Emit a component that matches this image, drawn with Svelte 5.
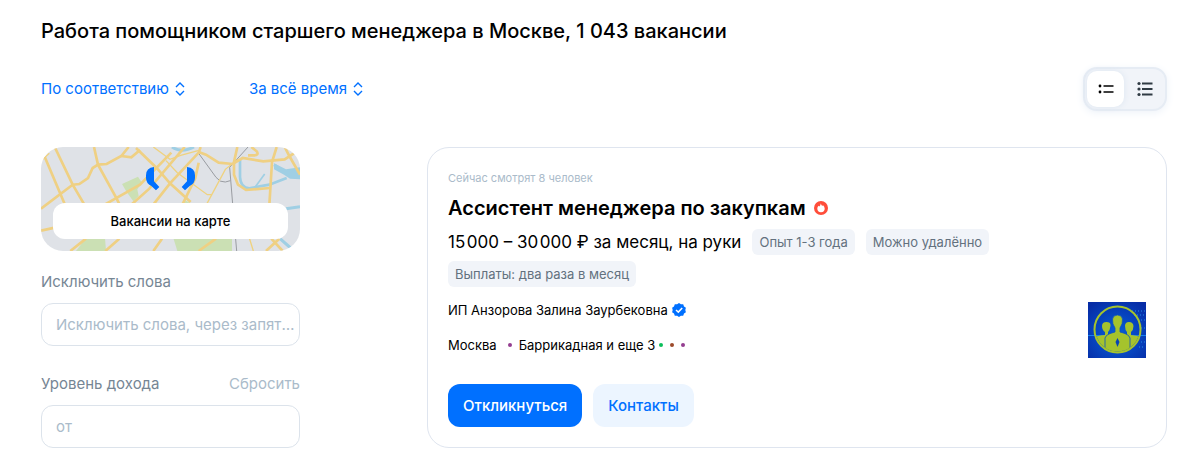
<script lang="ts">
  type View = "compact" | "full";

  let view = $state<View>("compact");
  let excluded = $state("");
  let salary = $state("");

  const sorts = ["По соответствию", "За всё время"];
  const tags = ["Опыт 1-3 года", "Можно удалённо", "Выплаты: два раза в месяц"];
  const metroLines = ["#0bbf5b", "#9c4a2b", "#943e90"];
</script>

<main class="page">
  <h1>Работа помощником старшего менеджера в Москве, 1 043 вакансии</h1>

  <div class="toolbar">
    <div class="sorts">
      {#each sorts as label (label)}
        <button class="sort" type="button">
          {label}
          <svg width="10" height="14" viewBox="0 0 10 14" aria-hidden="true">
            <path d="M1 5 L5 1 L9 5 M1 9 L5 13 L9 9" fill="none" stroke="currentColor" stroke-width="1.4" />
          </svg>
        </button>
      {/each}
    </div>
    <div class="switch" role="group" aria-label="Вид списка">
      <button
        type="button"
        class:active={view === "compact"}
        aria-label="Кратко"
        onclick={() => (view = "compact")}
      >
        <svg width="16" height="16" viewBox="0 0 16 16" aria-hidden="true">
          <path d="M5.5 5H15.5M5.5 11H15.5" stroke="#000" stroke-width="1.5" />
          <circle cx="2" cy="5" r="1.4" />
          <circle cx="2" cy="11" r="1.4" />
        </svg>
      </button>
      <button
        type="button"
        class:active={view === "full"}
        aria-label="Подробно"
        onclick={() => (view = "full")}
      >
        <svg width="16" height="16" viewBox="0 0 16 16" fill="#303b44" aria-hidden="true">
          <path d="M5 2.5H15.500M5 8H15.500M5 13.500H15.500" stroke="#303b44" stroke-width="2" />
          <circle cx="2" cy="2.500" r="1.6" />
          <circle cx="2" cy="8" r="1.6" />
          <circle cx="2" cy="13.500" r="1.6" />
        </svg>
      </button>
    </div>
  </div>

  <div class="columns">
    <aside>
      <div class="map">
        <svg viewBox="15 15 777 312" preserveAspectRatio="xMidYMid slice" aria-hidden="true">
          <rect x="15" y="15" width="777" height="312" fill="#dfe2e7" />
          <g fill="#cbe0b4">
            <path d="M258 126L306 104L318 122L304 142L308 162L292 178L272 150Z" />
            <path d="M120 327L150 288H207L210 327Z" />
            <path d="M412 288H588V327H424Z" />
            <path d="M436 186L450 176L468 186Z" />
          </g>
          <g fill="none" stroke="#9fcfe4">
            <path d="M408 15Q436 34 474 15" stroke-width="9" />
            <path d="M612 50V105Q614 138 640 139L700 128L752 108" stroke-width="8" />
            <path d="M656 137L686 96" stroke-width="5" />
            <path d="M714 68L752 92L792 88" stroke-width="9" />
            <path d="M750 200L792 194M732 290L764 318" stroke-width="9" />
          </g>
          <path d="M714 64L750 82L792 76V112L762 110L744 98L714 82Z" fill="#9fcfe4" />
          <g fill="none" stroke="#999ca1" stroke-width="3">
            <path d="M488 34L540 106Q552 122 568 120L583 116" />
            <path d="M636 15L581 76L590 186L602 327" />
          </g>
          <g fill="none" stroke="#efd27f" stroke-width="4">
            <path d="M352 15L402 52L434 40L486 26M390 56L424 92L514 158L528 158" />
            <path d="M606 52L568 82L510 190M640 288L652 327" />
            <path d="M20 52L40 34" />
          </g>
          <g fill="none" stroke="#efd083" stroke-width="8">
            <path d="M26 44L86 186M56 15L110 128L150 196" />
            <path d="M15 200L110 128L130 126L156 108L170 78L186 68L212 66L256 42L278 15" />
            <path d="M174 15L186 68L242 170L252 190" />
            <path d="M256 42L286 46L312 24" />
            <path d="M300 18L362 78L402 124L464 180" />
            <path d="M446 15L340 140L284 190M406 32L312 128L206 188" />
            <path d="M494 15L488 32L402 124L350 190M488 62L478 108L438 190" />
            <path d="M488 30L510 38L548 62L590 66L620 48L682 58L746 52L792 22" />
            <path d="M604 15L594 60V98L606 128L630 144L702 138" />
            <path d="M636 40H654Q670 40 662 28L646 15" />
            <path d="M722 15L708 60L700 190M746 15L760 42L792 98" />
            <path d="M15 266L60 256M103 327L150 290M208 327L250 290M352 327L378 290M488 327L540 290M690 327L730 290M706 290L740 327" />
          </g>
          <path d="M354 75Q330 77 330 100V108Q330 124 346 132L360 145L370 135L354 118Z" fill="#0070ff" />
          <path d="M453 75Q477 77 477 100V108Q477 124 461 132L447 145L437 135L453 118Z" fill="#0070ff" />
        </svg>
        <a href="#map">Вакансии на карте</a>
      </div>

      <div class="field">
        <label for="excluded">Исключить слова</label>
        <input id="excluded" type="text" placeholder="Исключить слова, через запятую" bind:value={excluded} />
      </div>

      <div class="field">
        <div class="field-head">
          <label for="salary">Уровень дохода</label>
          <button class="reset" type="button" onclick={() => (salary = "")}>Сбросить</button>
        </div>
        <input id="salary" type="text" placeholder="от" bind:value={salary} />
      </div>
    </aside>

    <article class="card">
      <p class="viewers">Сейчас смотрят 8 человек</p>
      <h2>
        <a href="#vacancy">Ассистент менеджера по закупкам</a>
        <svg width="14" height="14" viewBox="0 0 14 14" aria-hidden="true">
          <circle cx="7" cy="7" r="7" fill="#ff4d3a" />
          <path
            d="M6.800 2.400Q7.300 4.300 8.300 5Q8.900 4.700 8.900 4Q10.700 5.600 10.700 7.600A3.700 3.700 0 0 1 3.300 7.600Q3.300 5.800 4.600 4.700L5.300 5.400Q6.500 4.300 6.800 2.400Z"
            fill="#fff"
          />
        </svg>
      </h2>
      <div class="terms">
        <span class="pay">15&#8202;000 – 30&#8202;000 ₽ за месяц, на руки</span>
        {#each tags as tag (tag)}
          <span class="tag">{tag}</span>
        {/each}
      </div>
      <div class="employer">
        <div class="about">
          <p class="company">
            <a href="#employer">ИП Анзорова Залина Заурбековна</a>
            <svg width="14" height="14" viewBox="0 0 14 14" aria-hidden="true">
              <path
                d="M7 0L8.900 1.300L11.200 1.200L12 3.400L13.900 4.700L13.300 7L13.900 9.300L12 10.600L11.200 12.800L8.900 12.700L7 14L5.100 12.700L2.800 12.800L2 10.600L.1 9.300L.7 7L.1 4.700L2 3.400L2.800 1.200L5.100 1.300Z"
                fill="#0070ff"
              />
              <path d="M4 7L6.300 9.100L10.200 5" fill="none" stroke="#fff" stroke-width="1.5" />
            </svg>
          </p>
          <p class="place">
            <span class="city">Москва</span>
            <span class="dot" style="background: #943e90"></span>
            <span class="station">Баррикадная и еще 3</span>
            {#each metroLines as color (color)}
              <span class="dot" style="background: {color}"></span>
            {/each}
          </p>
        </div>
        <svg class="logo" width="58" height="56" viewBox="0 0 58 56" role="img" aria-label="Логотип компании">
          <defs>
            <radialGradient id="glow" cx="0.5" cy="0.6" r="0.7">
              <stop offset="0" stop-color="#0760dc" />
              <stop offset="1" stop-color="#062ca6" />
            </radialGradient>
            <clipPath id="disc"><circle cx="29.500" cy="27.500" r="22" /></clipPath>
          </defs>
          <rect width="58" height="56" fill="url(#glow)" />
          <path d="M0 33.500H58" stroke="#1680ef" />
          <path d="M44 9H57M46 13H57M50 18H57M53 26H57M53 40H57M51 45H57" stroke="#268fea" stroke-dasharray="1 2" />
          <g fill="#a5c32c" clip-path="url(#disc)">
            <path d="M4 56V38Q5 34 17 33V30Q14 28 14 24Q14 20 18.500 20Q23 20 22.500 24Q22 28 20 30V33L25 35V56Z" />
            <path d="M56 56V38Q54 34 43 33V30Q45.500 28 45.500 24Q45 20 41 20Q37 20 37 24Q37 28 39 30V33L35 35V56Z" />
            <path
              d="M17 56V36Q18 32 27 30V26Q24 22 24.500 17Q25 13 29.500 13Q34 13 34.500 17Q35 22 32 26V30Q41 32 42 36V56Z"
              stroke="#0b50c0"
              stroke-width=".8"
            />
          </g>
          <path d="M29.500 36L31.500 40L29.500 45L27.500 40Z" fill="#0744b5" />
          <circle cx="29.500" cy="27.500" r="23" fill="none" stroke="#a5c32c" stroke-width="2" />
        </svg>
      </div>
      <div class="actions">
        <button class="primary" type="button">Откликнуться</button>
        <button class="secondary" type="button">Контакты</button>
      </div>
    </article>
  </div>
</main>

<style>
  :global(body) {
    margin: 0;
    background: #fff;
  }
  .page {
    padding: 16px 33px 11px 41px;
    font-family: Inter, "Liberation Sans", sans-serif;
    font-size: 15px;
    line-height: 20px;
    color: #000;
  }
  h1,
  h2,
  p {
    margin: 0;
    font-weight: 400;
  }
  button,
  input {
    font: inherit;
    box-sizing: border-box;
  }
  button {
    padding: 0;
    border: 0;
    background: none;
    cursor: pointer;
  }
  a {
    color: inherit;
    text-decoration: none;
  }
  svg {
    flex: none;
  }
  h1 {
    font-size: 20px;
    line-height: 30px;
    font-weight: 500;
  }
  .toolbar {
    display: flex;
    justify-content: space-between;
    align-items: center;
    margin: 21px 0 36px;
  }
  .sorts {
    display: flex;
    gap: 64px;
  }
  .sort {
    display: flex;
    align-items: center;
    gap: 6px;
    color: #0070ff;
  }
  .switch {
    display: flex;
    gap: 2px;
    padding: 2px;
    border: 2px solid #e6ecf4;
    border-radius: 14px;
    background: #f1f4f9;
    box-shadow: 0 2px 8px #eef3f9;
  }
  .switch button {
    display: grid;
    place-items: center;
    width: 37px;
    height: 36px;
    border-radius: 10px;
  }
  .switch .active {
    background: #fff;
    box-shadow: 0 0 6px #dce5f0;
  }
  .columns {
    display: grid;
    grid-template-columns: 7fr 20fr;
    gap: 127px;
    align-items: start;
  }
  aside {
    display: flex;
    flex-direction: column;
    gap: 28px;
  }
  .map {
    position: relative;
    display: flex;
    align-items: flex-end;
    min-height: 104px;
    padding: 12px;
    box-sizing: border-box;
    border-radius: 22px;
    overflow: hidden;
  }
  .map svg {
    position: absolute;
    inset: 0;
    width: 100%;
    height: 100%;
  }
  .map a {
    position: relative;
    flex: 1;
    border-radius: 12px;
    background: #fff;
    font-size: 13px;
    line-height: 36px;
    font-weight: 500;
    text-align: center;
  }
  .field {
    display: flex;
    flex-direction: column;
    gap: 11px;
    color: #768694;
  }
  .map + .field {
    margin-top: -7px;
  }
  .field-head {
    display: flex;
    justify-content: space-between;
  }
  .reset {
    color: #aabbca;
  }
  input {
    width: 100%;
    height: 43px;
    padding: 0 2px 0 14px;
    border: 1px solid #dce3eb;
    border-radius: 12px;
    outline: 0;
    background: #fff;
    color: #000;
    text-overflow: ellipsis;
  }
  input::placeholder {
    color: #aabbca;
    opacity: 1;
  }
  .card {
    padding: 20px;
    border: 1px solid #dfe5ef;
    border-radius: 22px;
  }
  .viewers {
    color: #aabbca;
    font-size: 11px;
  }
  h2 {
    display: flex;
    align-items: center;
    gap: 8px;
    margin-top: 6px;
    font-size: 20px;
    line-height: 28px;
    font-weight: 600;
  }
  .terms {
    display: flex;
    flex-wrap: wrap;
    align-items: center;
    gap: 6px 11px;
    max-width: 600px;
    margin-top: 7px;
  }
  .pay {
    font-size: 17px;
  }
  .tag {
    padding: 0 7px;
    border-radius: 6px;
    background: #f1f4f9;
    color: #63717e;
    font-size: 13px;
    line-height: 26px;
  }
  .employer {
    display: flex;
    justify-content: space-between;
    align-items: flex-end;
    margin-top: 13px;
    font-size: 13px;
  }
  .company {
    display: flex;
    align-items: center;
    gap: 4px;
  }
  .place {
    display: flex;
    align-items: center;
    gap: 7px;
    margin-top: 15px;
    padding-bottom: 3px;
  }
  .city {
    margin-right: 4px;
  }
  .dot {
    width: 4px;
    height: 4px;
    border-radius: 50%;
  }
  .station + .dot {
    margin-left: -3px;
  }
  .actions {
    display: flex;
    gap: 11px;
    margin-top: 26px;
  }
  .actions button {
    height: 43px;
    padding: 0 15px;
    border-radius: 12px;
    font-weight: 500;
  }
  .actions .primary {
    background: #0070ff;
    color: #fff;
  }
  .actions .secondary {
    background: #ecf5ff;
    color: #0070ff;
  }
</style>
